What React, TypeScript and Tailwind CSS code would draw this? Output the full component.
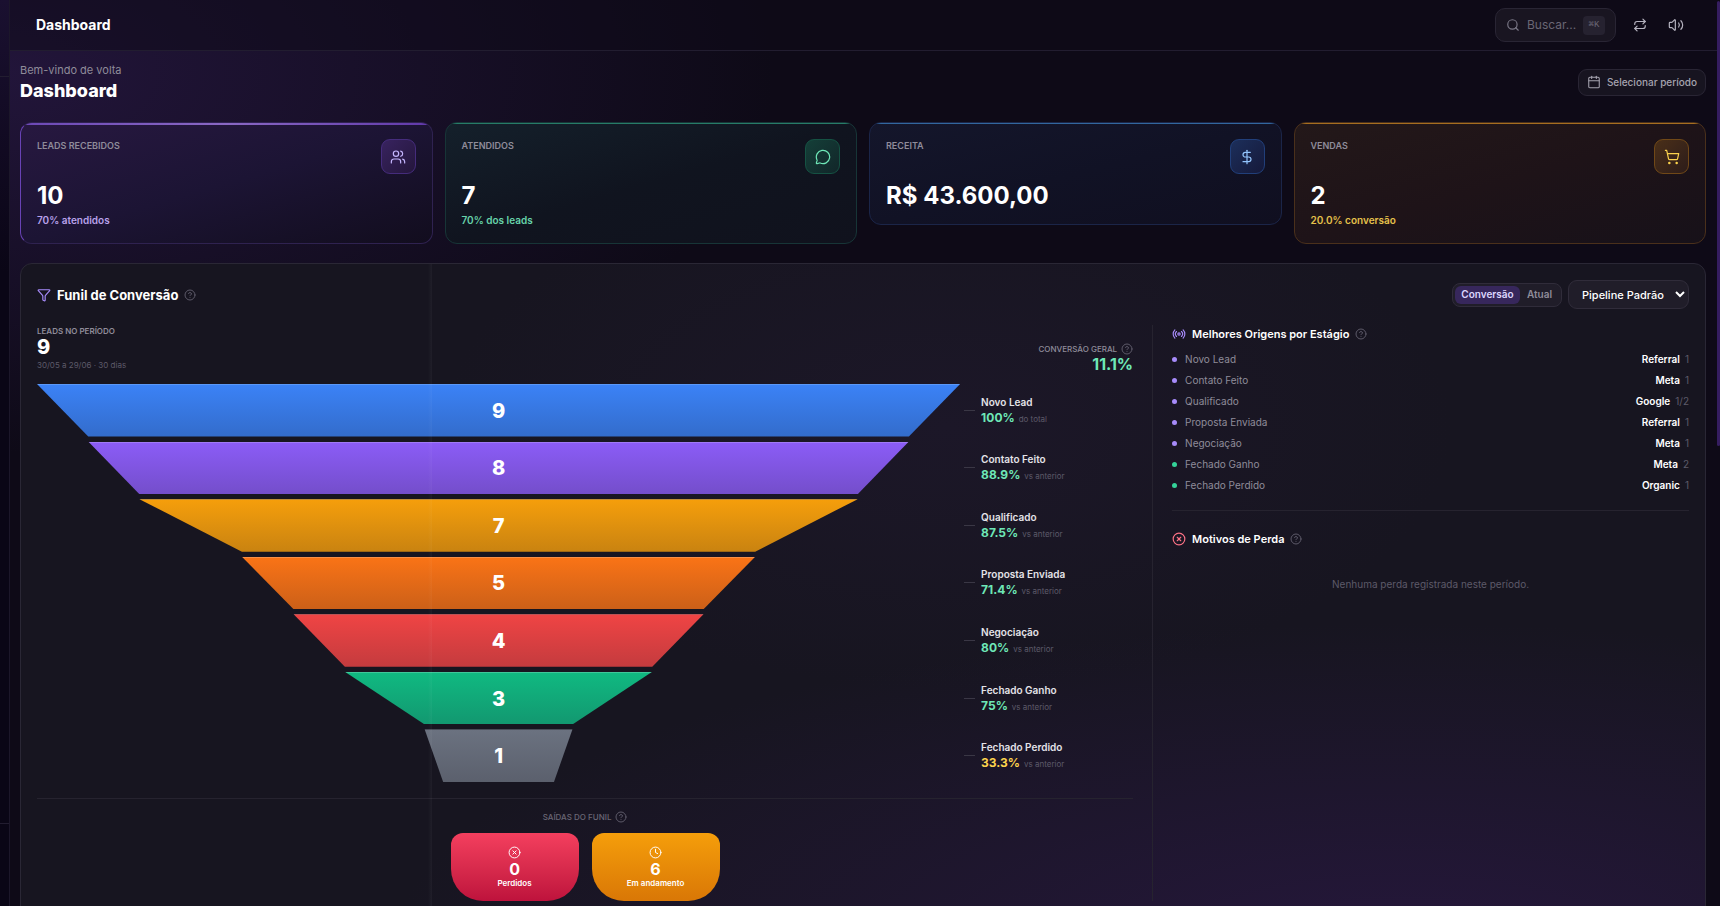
import React, { useState } from 'react';
import {
  Calendar,
  CircleX,
  Clock,
  DollarSign,
  Filter,
  CircleHelp,
  MessageCircle,
  Radio,
  Repeat,
  Search,
  ShoppingCart,
  Users,
  Volume2,
} from 'lucide-react';

type Tone = 'good' | 'warn';

const KPIS = [
  {
    label: 'LEADS RECEBIDOS',
    value: '10',
    sub: '70% atendidos',
    icon: Users,
    card: 'border-[#2f2250] border-l-[#6842b4] bg-linear-to-br from-[#271840] via-[#1c1434] to-[#120d1e]',
    line: 'h-[2px] bg-linear-to-r from-[#6c48b6] via-[#8a68c4] to-[#6138aa]',
    box: 'border-[#452c7c] bg-linear-to-br from-[#38235f] to-[#24163c] text-[#c4b5fd]',
    text: 'text-[#b8a1ea]',
  },
  {
    label: 'ATENDIDOS',
    value: '7',
    sub: '70% dos leads',
    icon: MessageCircle,
    card: 'border-[#173537] bg-linear-to-br from-[#14202b] via-[#10141f] to-[#10121d]',
    line: 'h-px bg-[#277c68]',
    box: 'border-[#155243] bg-linear-to-br from-[#143f38] to-[#112629] text-[#6ee7b7]',
    text: 'text-[#67d3aa]',
  },
  {
    label: 'RECEITA',
    value: 'R$ 43.600,00',
    icon: DollarSign,
    card: 'border-[#1b2548] bg-linear-to-br from-[#14162b] via-[#111225] to-[#100f20]',
    line: 'h-px bg-[#32679e]',
    box: 'border-[#213f7a] bg-linear-to-br from-[#1c2f5b] to-[#15193a] text-[#93c5fd]',
    text: '',
  },
  {
    label: 'VENDAS',
    value: '2',
    sub: '20.0% conversão',
    icon: ShoppingCart,
    card: 'border-[#4a301b] bg-linear-to-br from-[#231819] via-[#1e1318] to-[#171119]',
    line: 'h-px bg-[#a66e20]',
    box: 'border-[#704817] bg-linear-to-br from-[#4a2f18] to-[#2d1c19] text-[#fcd34d]',
    text: 'text-[#e5c14b]',
  },
];

const STAGES: { name: string; count: number; pct: string; note: string; tone: Tone; fill: string; from: number; to: number }[] = [
  { name: 'Novo Lead', count: 9, pct: '100%', note: 'do total', tone: 'good', fill: 'from-[#3b82f6] to-[#336ccb] border-[#5b98f7]', from: 100, to: 88.9 },
  { name: 'Contato Feito', count: 8, pct: '88.9%', note: 'vs anterior', tone: 'good', fill: 'from-[#8b5cf6] to-[#744ecb] border-[#a07af7]', from: 88.9, to: 77.8 },
  { name: 'Qualificado', count: 7, pct: '87.5%', note: 'vs anterior', tone: 'good', fill: 'from-[#f59e0b] to-[#c98310] border-[#f7b541]', from: 77.8, to: 55.6 },
  { name: 'Proposta Enviada', count: 5, pct: '71.4%', note: 'vs anterior', tone: 'good', fill: 'from-[#f97316] to-[#cc6018] border-[#fa8f45]', from: 55.6, to: 44.4 },
  { name: 'Negociação', count: 4, pct: '80%', note: 'vs anterior', tone: 'good', fill: 'from-[#ef4444] to-[#c43b3e] border-[#f26969]', from: 44.4, to: 33.3 },
  { name: 'Fechado Ganho', count: 3, pct: '75%', note: 'vs anterior', tone: 'good', fill: 'from-[#10b981] to-[#129870] border-[#40c79a]', from: 33.3, to: 16 },
  { name: 'Fechado Perdido', count: 1, pct: '33.3%', note: 'vs anterior', tone: 'warn', fill: 'from-[#6b7280] to-[#5b606d] border-[#7d838f]', from: 16, to: 12 },
];

const ORIGINS = [
  { stage: 'Novo Lead', source: 'Referral', count: '1', won: false },
  { stage: 'Contato Feito', source: 'Meta', count: '1', won: false },
  { stage: 'Qualificado', source: 'Google', count: '1/2', won: false },
  { stage: 'Proposta Enviada', source: 'Referral', count: '1', won: false },
  { stage: 'Negociação', source: 'Meta', count: '1', won: false },
  { stage: 'Fechado Ganho', source: 'Meta', count: '2', won: true },
  { stage: 'Fechado Perdido', source: 'Organic', count: '1', won: true },
];

const trapezoid = (from: number, to: number) =>
  `polygon(${50 - from / 2}% 0, ${50 + from / 2}% 0, ${50 + to / 2}% 100%, ${50 - to / 2}% 100%)`;

function Help() {
  return <CircleHelp className="w-3 h-3 text-[#5d5a69] shrink-0" strokeWidth={2} />;
}

function Header() {
  return (
    <header className="flex items-center justify-between h-[51px] pl-[26px] pr-9 border-b border-[#221d30] bg-[#0e0a18]/50 shrink-0">
      <span className="text-sm leading-5 font-bold">Dashboard</span>
      <div className="flex items-center gap-4">
        <label className="flex items-center gap-[7px] w-[121px] h-[34px] px-[10px] rounded-[10px] border border-[#292534] bg-[#191521]">
          <Search className="w-[14px] h-[14px] text-[#7b7887] shrink-0" />
          <input
            aria-label="Buscar"
            placeholder="Buscar..."
            className="flex-1 min-w-0 bg-transparent text-xs outline-none placeholder:text-[#6a6775]"
          />
          <kbd className="flex items-center justify-center w-[22px] h-[19px] rounded bg-[#262230] text-[9px] leading-none font-['Liberation_Mono',monospace] text-[#6a6775] shrink-0">⌘K</kbd>
        </label>
        <button aria-label="Alternar" className="w-4 h-4 flex items-center justify-center text-[#b5b3bf]">
          <Repeat className="w-[14px] h-[14px]" />
        </button>
        <button aria-label="Som" className="ml-1 w-4 h-4 flex items-center justify-center text-[#b5b3bf]">
          <Volume2 className="w-4 h-4" strokeWidth={1.8} />
        </button>
      </div>
    </header>
  );
}

function KpiCard({ kpi }: { kpi: (typeof KPIS)[number] }) {
  const Icon = kpi.icon;
  return (
    <div className={`relative overflow-hidden rounded-xl border p-4 ${kpi.card}`}>
      <div className={`absolute inset-x-0 top-0 ${kpi.line}`} />
      <div className="flex items-start justify-between">
        <span className="text-[9px] leading-[14px] font-semibold text-[#8f8c9a]">{kpi.label}</span>
        <span className={`w-[35px] h-[35px] rounded-[9px] border flex items-center justify-center ${kpi.box}`}>
          <Icon className="w-4 h-4" strokeWidth={1.8} />
        </span>
      </div>
      <p className="mt-[10px] text-2xl leading-6 font-bold">{kpi.value}</p>
      {kpi.sub && <p className={`mt-[5px] text-[10px] leading-[14px] font-semibold ${kpi.text}`}>{kpi.sub}</p>}
    </div>
  );
}

function Funnel() {
  return (
    <div className="mt-3 h-[398px] grid grid-rows-7 gap-[5px]">
      {STAGES.map(s => (
        <div key={s.name} className="flex items-center min-h-0">
          <div
            className={`flex-1 h-full flex items-center justify-center border-t bg-linear-to-b ${s.fill}`}
            style={{ clipPath: trapezoid(s.from, s.to) }}
          >
            <span className="text-xl leading-6 font-extrabold">{s.count}</span>
          </div>
          <span className="ml-1 w-[11px] h-px bg-[#3a3745]" />
          <div className="ml-[6px] w-[152px]">
            <p className="text-[10px] leading-4 font-semibold text-[#e4e3e8]">{s.name}</p>
            <p className="flex items-baseline gap-1 leading-4">
              <span className={`text-xs leading-4 font-bold ${s.tone === 'good' ? 'text-[#6ee7b7]' : 'text-[#fcd34d]'}`}>{s.pct}</span>
              <span className="text-[8px] leading-4 text-[#5d5a69]">{s.note}</span>
            </p>
          </div>
        </div>
      ))}
    </div>
  );
}

function FunnelExits() {
  return (
    <div className="mt-4 pt-3 border-t border-[#26232f]">
      <div className="flex items-center justify-center gap-1 leading-3">
        <span className="text-[8px] leading-3 font-medium text-[#6a6775]">SAÍDAS DO FUNIL</span>
        <Help />
      </div>
      <div className="mt-[10px] flex justify-center gap-[13px]">
        <button className="w-32 h-[68px] rounded-t-xl rounded-b-[32px] bg-linear-to-b from-[#f43f5e] to-[#be123c] flex flex-col items-center justify-center">
          <CircleX className="w-[13px] h-[13px]" strokeWidth={1.8} />
          <span className="mt-px text-base leading-[18px] font-bold">0</span>
          <span className="text-[8px] leading-[10px] font-semibold">Perdidos</span>
        </button>
        <button className="w-32 h-[68px] rounded-t-xl rounded-b-[32px] bg-linear-to-b from-[#f59e0b] to-[#d97706] flex flex-col items-center justify-center">
          <Clock className="w-[13px] h-[13px]" strokeWidth={1.8} />
          <span className="mt-px text-base leading-[18px] font-bold">6</span>
          <span className="text-[8px] leading-[10px] font-semibold">Em andamento</span>
        </button>
      </div>
    </div>
  );
}

function SidePanel() {
  return (
    <aside className="w-[32.5%] shrink-0 border-l border-[#26232f] pl-[19px]">
      <div className="flex items-center gap-[6px] leading-[18px]">
        <Radio className="w-[14px] h-[14px] text-[#a78bfa]" />
        <h3 className="text-[11px] leading-[18px] font-semibold">Melhores Origens por Estágio</h3>
        <Help />
      </div>
      <ul className="mt-[6px]">
        {ORIGINS.map(o => (
          <li key={o.stage} className="flex items-center h-[21px] text-[10px] leading-[21px]">
            <span className={`w-[5px] h-[5px] rounded-full ${o.won ? 'bg-[#34d399]' : 'bg-[#a78bfa]'}`} />
            <span className="ml-2 flex-1 text-[#8f8c9a]">{o.stage}</span>
            <span className="font-semibold">{o.source}</span>
            <span className="ml-[5px] text-[#5d5a69]">{o.count}</span>
          </li>
        ))}
      </ul>
      <div className="mt-[14px] pt-[19px] border-t border-[#26232f]">
        <div className="flex items-center gap-[6px] leading-[18px]">
          <CircleX className="w-[14px] h-[14px] text-[#fb7185]" />
          <h3 className="text-[11px] leading-[18px] font-semibold">Motivos de Perda</h3>
          <Help />
        </div>
        <p className="mt-7 text-center text-[10px] leading-4 text-[#5d5a69]">Nenhuma perda registrada neste período.</p>
      </div>
    </aside>
  );
}

export default function App() {
  const [mode, setMode] = useState<'conversao' | 'atual'>('conversao');

  return (
    <div className="relative flex h-screen overflow-hidden bg-[#0e0a17] bg-[radial-gradient(ellipse_45%_42%_at_0%_8%,#22153a_0%,transparent_100%)] font-['Inter',sans-serif] text-white">
      {/* edge of the collapsed sidebar */}
      <div className="w-[10px] shrink-0 flex flex-col border-r border-[#1c172a] bg-linear-to-b from-[#1a1030] to-[#0a0616] to-30%">
        <div className="h-[77px] border-b border-[#221d30]" />
        <div className="flex-1" />
        <div className="h-[83px] border-t border-[#221d30]" />
      </div>

      <div className="flex-1 min-w-0 flex flex-col">
        <Header />
        <main className="flex-1 min-h-0 overflow-hidden pl-[10px] pr-[14px] pt-[10px]">
          <div className="flex items-center justify-between">
            <div>
              <p className="text-[11px] leading-[18px] text-[#8f8c9a]">Bem-vindo de volta</p>
              <h1 className="text-lg leading-6 font-extrabold">Dashboard</h1>
            </div>
            <button className="flex items-center gap-[6px] h-[27px] px-2 rounded-[9px] border border-[#292534] bg-[#171420] text-[10px] font-medium text-[#a5a3af]">
              <Calendar className="w-[14px] h-[14px]" strokeWidth={1.8} /> Selecionar período
            </button>
          </div>

          <div className="mt-[19px] grid grid-cols-4 items-start gap-3">
            {KPIS.map(k => <KpiCard key={k.label} kpi={k} />)}
          </div>

          <section className="relative mt-[19px] rounded-xl border border-[#2a2735] bg-[#171520] bg-[radial-gradient(ellipse_60%_50%_at_82%_105%,#25173b_0%,transparent_100%),radial-gradient(ellipse_30%_40%_at_55%_25%,#1c1728_0%,transparent_100%)] p-4">
            <div className="flex items-center justify-between h-[29px]">
              <div className="flex items-center gap-[6px]">
                <Filter className="w-[14px] h-[14px] text-[#a78bfa]" />
                <h2 className="text-[13px] leading-5 font-bold">Funil de Conversão</h2>
                <Help />
              </div>
              <div className="flex items-center gap-[6px]">
                <div className="flex items-center h-6 w-[110px] p-[2px] rounded-lg border border-[#302c3a] bg-[#201d29]">
                  <button
                    onClick={() => setMode('conversao')}
                    className={`h-full flex-[5] rounded-md text-[10px] font-semibold ${mode === 'conversao' ? 'bg-[#37275c] text-[#ddd6fe]' : 'text-[#8f8c9a]'}`}
                  >
                    Conversão
                  </button>
                  <button
                    onClick={() => setMode('atual')}
                    className={`h-full flex-[3] rounded-md text-[10px] font-semibold ${mode === 'atual' ? 'bg-[#37275c] text-[#ddd6fe]' : 'text-[#8f8c9a]'}`}
                  >
                    Atual
                  </button>
                </div>
                <select aria-label="Pipeline" className="w-[121px] h-[29px] pl-[9px] rounded-[9px] border border-[#302c3a] bg-[#201d29] text-[11px] font-medium">
                  <option>Pipeline Padrão</option>
                </select>
              </div>
            </div>

            <div className="mt-4 flex">
              <div className="flex-1 min-w-0 pr-[19px]">
                <div className="flex items-end justify-between">
                  <div>
                    <p className="text-[8px] leading-3 font-semibold text-[#8f8c9a]">LEADS NO PERÍODO</p>
                    <p className="text-xl leading-5 font-extrabold">9</p>
                    <p className="mt-px text-[8px] leading-[14px] text-[#5d5a69]">30/05 a 29/06 · 30 dias</p>
                  </div>
                  <div className="text-right">
                    <p className="flex items-center gap-1 text-[8px] leading-[14px] font-medium text-[#8f8c9a]">CONVERSÃO GERAL <Help /></p>
                    <p className="text-base leading-4 font-bold text-[#6ee7b7]">11.1%</p>
                  </div>
                </div>
                <Funnel />
                <FunnelExits />
              </div>
              <SidePanel />
            </div>
            <div className="absolute inset-y-0 left-[407px] w-1 bg-linear-to-r from-transparent to-white/4 pointer-events-none" />
          </section>
        </main>
      </div>
      <div className="absolute right-0 top-px w-[3px] h-[445px] rounded-full bg-[#351d60]" />
    </div>
  );
}
